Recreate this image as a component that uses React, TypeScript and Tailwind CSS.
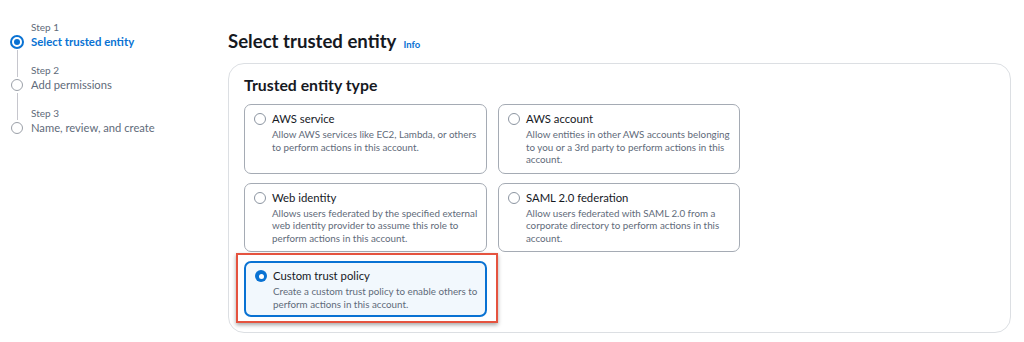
import React from "react";

type Step = { label: string; name: string; active?: boolean };

const STEPS: Step[] = [
  { label: "Step 1", name: "Select trusted entity", active: true },
  { label: "Step 2", name: "Add permissions" },
  { label: "Step 3", name: "Name, review, and create" },
];

type Tile = { title: string; desc: string; selected?: boolean };

const TILES: Tile[] = [
  { title: "AWS service", desc: "Allow AWS services like EC2, Lambda, or others to perform actions in this account." },
  {
    title: "AWS account",
    desc: "Allow entities in other AWS accounts belonging to you or a 3rd party to perform actions in this account.",
  },
  {
    title: "Web identity",
    desc: "Allows users federated by the specified external web identity provider to assume this role to perform actions in this account.",
  },
  {
    title: "SAML 2.0 federation",
    desc: "Allow users federated with SAML 2.0 from a corporate directory to perform actions in this account.",
  },
  {
    title: "Custom trust policy",
    desc: "Create a custom trust policy to enable others to perform actions in this account.",
    selected: true,
  },
];

function StepNav() {
  return (
    <nav className="w-[228px] shrink-0 pl-[10px] pt-[20px]">
      {STEPS.map((s, i) => (
        <div key={s.label} className="flex gap-[7px]">
          <div className="flex w-[14px] flex-col items-center">
            <div className={`h-[14px] w-px ${i > 0 ? "bg-[#c6c6cd]" : ""}`} />
            <div className="flex h-[16px] items-center">
              {s.active ? (
                <span className="flex h-[14px] w-[14px] items-center justify-center rounded-full border-2 border-[#0972d3]">
                  <span className="h-[6px] w-[6px] rounded-full bg-[#0972d3]" />
                </span>
              ) : (
                <span className="h-[12px] w-[12px] rounded-full border border-[#9ba0a8]" />
              )}
            </div>
            <div className={`w-px flex-1 ${i < STEPS.length - 1 ? "bg-[#c6c6cd]" : ""}`} />
          </div>
          <div className="pb-[13px]">
            <div className="h-[14px] text-[10px] leading-[14px] text-[#5f6b7a]">{s.label}</div>
            <div
              className={`h-[16px] leading-[16px] ${
                s.active ? "text-[11.4px] font-bold text-[#0972d3]" : "text-[11.2px] text-[#5f6b7a]"
              }`}
            >
              {s.name}
            </div>
          </div>
        </div>
      ))}
    </nav>
  );
}

function TileCard({ tile }: { tile: Tile }) {
  return (
    <div className="relative">
      <div
        className={`flex h-full gap-[6px] rounded-[7px] pl-[9px] pr-[5px] ${
          tile.selected
            ? "border-2 border-[#0972d3] bg-[#f2f8fd] pb-[5px] pl-[8px] pt-[4px]"
            : "border border-[#a5abb4] bg-white pb-[7px] pt-[5px]"
        }`}
      >
        <div className="flex h-[18px] shrink-0 items-center">
          {tile.selected ? (
            <span className="flex h-[12px] w-[12px] items-center justify-center rounded-full bg-[#0972d3]">
              <span className="h-[5px] w-[5px] rounded-full bg-white" />
            </span>
          ) : (
            <span className="h-[12px] w-[12px] rounded-full border border-[#8c95a1] bg-white" />
          )}
        </div>
        <div>
          <div className="text-[11.3px] leading-[18px] text-[#16191f]">{tile.title}</div>
          <div className="text-[9.8px] leading-[12.5px] text-[#5f6b7a]">{tile.desc}</div>
        </div>
      </div>
      {tile.selected && (
        <div className="pointer-events-none absolute -bottom-[6px] -left-[8px] -right-[11px] -top-[8px] border-2 border-[#e5533f] shadow-[0_2px_4px_rgba(0,0,0,0.35)]" />
      )}
    </div>
  );
}

export default function App() {
  return (
    <div
      className="flex h-[342px] w-[1024px] overflow-hidden bg-white"
      style={{ fontFamily: 'Lato, "Open Sans", sans-serif' }}
    >
      <StepNav />
      <main className="flex-1 pr-[13px] pt-[27px]">
        <div className="mb-[8px] flex h-[28px] items-baseline gap-[7px]">
          <h1 className="text-[18.6px] font-bold leading-[28px] text-[#16191f]">Select trusted entity</h1>
          <a className="text-[9.5px] font-bold text-[#0972d3]">Info</a>
        </div>
        <section className="h-[270px] rounded-[16px] border border-[#dcdfe3] px-[15px] pt-[9px]">
          <h2 className="mb-[7px] h-[24px] text-[15.8px] font-bold leading-[24px] text-[#16191f]">Trusted entity type</h2>
          <div className="grid grid-cols-[243px_242px] gap-x-[11px] gap-y-[9px]">
            {TILES.map((t) => (
              <TileCard key={t.title} tile={t} />
            ))}
          </div>
        </section>
      </main>
    </div>
  );
}
